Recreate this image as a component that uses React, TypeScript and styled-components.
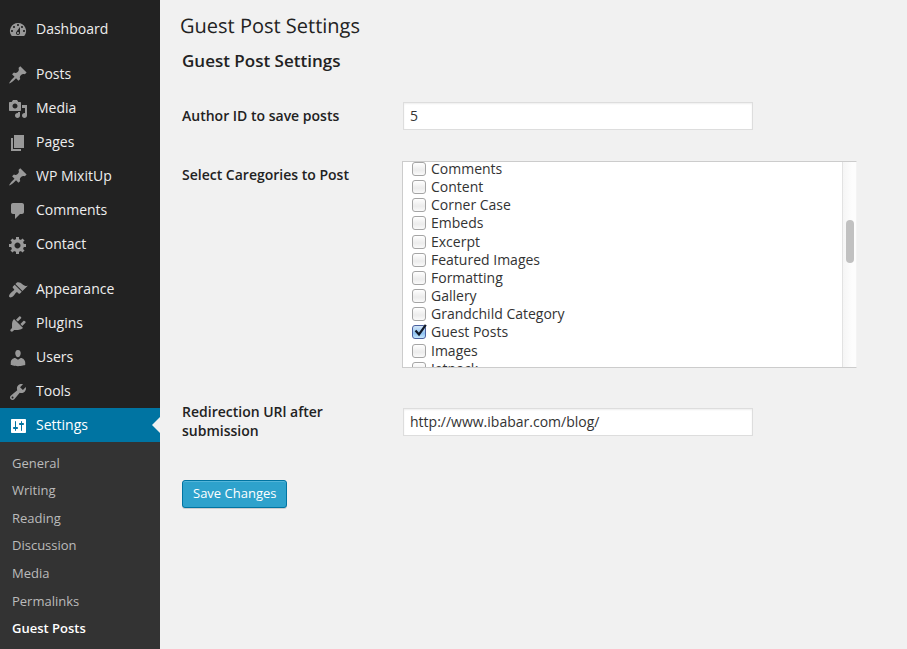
import React, { useLayoutEffect, useRef } from "react";
import styled, { createGlobalStyle, css } from "styled-components";

const GlobalStyle = createGlobalStyle`
  *, *::before, *::after { box-sizing: border-box; }
  body {
    margin: 0;
    background: #f1f1f1;
    color: #333;
    font-family: "Open Sans", "Noto Sans", sans-serif;
    font-size: 14px;
    line-height: 19px;
  }
  ul { list-style: none; margin: 0; padding: 0; }
`;

const Page = styled.div`
  display: flex;
  min-height: 100vh;
`;

const Sidebar = styled.nav`
  flex: 0 0 160px;
  padding-top: 12px;
  background: #222;
`;

const MenuGroup = styled.ul`
  & + & { margin-top: 11px; }
`;

const MenuLink = styled.a<{ $current?: boolean }>`
  position: relative;
  display: flex;
  align-items: center;
  gap: 8px;
  height: 34px;
  padding: 0 0 2px 8px;
  color: ${(p) => (p.$current ? "#fff" : "#eee")};
  background: ${(p) => (p.$current ? "#0074a2" : "transparent")};
  text-decoration: none;

  ${(p) =>
    p.$current &&
    css`
      &::after {
        content: "";
        position: absolute;
        right: 0;
        top: 9px;
        border: 8px solid transparent;
        border-left-width: 0;
        border-right-color: #f1f1f1;
      }
    `}
`;

const MenuIcon = styled.svg<{ $current?: boolean }>`
  flex: none;
  width: 20px;
  height: 20px;
  margin-top: 4px;
  fill: ${(p) => (p.$current ? "#fff" : "#999")};
`;

const Submenu = styled.ul`
  display: grid;
  grid-auto-rows: 1fr;
  height: 207px;
  padding: 7px 0;
  background: #333;
`;

const SubmenuItem = styled.li`
  display: flex;
  align-items: center;
`;

const SubmenuLink = styled.a<{ $current?: boolean }>`
  flex: 1;
  padding-left: 12px;
  font-size: 13px;
  line-height: 16px;
  font-weight: ${(p) => (p.$current ? 600 : 400)};
  color: ${(p) => (p.$current ? "#fff" : "#bbb")};
  text-decoration: none;
`;

const Main = styled.main`
  flex: 1;
  min-width: 0;
  padding: 10px 50px 20px 20px;
`;

const PageTitle = styled.h1`
  margin: 0;
  font-size: 20px;
  line-height: 32px;
  font-weight: 400;
  color: #222;
  text-rendering: geometricPrecision;
`;

const Form = styled.form`
  display: flex;
  flex-direction: column;
  gap: 30px;
  padding-left: 2px;
`;

const SectionTitle = styled.h2`
  margin: 9px 0 0;
  font-size: 17px;
  line-height: 20px;
  font-weight: 600;
  color: #222;
`;

const FormRow = styled.div<{ $top?: boolean }>`
  display: grid;
  grid-template-columns: 200px minmax(0, 1fr);
  column-gap: 20px;
  align-items: ${(p) => (p.$top ? "start" : "center")};
`;

const FieldLabel = styled.label`
  padding: 4px 0 6px;
  font-weight: 600;
  color: #222;
`;

const TextField = styled.input`
  width: 350px;
  max-width: 100%;
  height: 28px;
  margin: 1px;
  padding: 0 6px 1px;
  border: 1px solid #ddd;
  border-radius: 0;
  background: #fff;
  box-shadow: inset 0 1px 2px rgba(0, 0, 0, 0.07);
  color: #333;
  font: inherit;
`;

const CategoryBox = styled.div`
  display: flex;
  height: 207px;
  border: 1px solid #ccc;
  border-right-color: #f4f4f4;
  background: #fff;
`;

const CategoryScroll = styled.div`
  flex: 1;
  overflow-y: auto;
  scrollbar-width: none;
`;

const CategoryList = styled.ul`
  display: grid;
  grid-auto-rows: 1fr;
  height: 218px;
  padding-left: 9px;
`;

const CategoryLabel = styled.label`
  position: relative;
  display: flex;
  align-items: center;
  gap: 5px;
  line-height: 18px;
`;

const Checkbox = styled.input`
  appearance: none;
  flex: none;
  width: 14px;
  height: 14px;
  margin: 0;
  border: 1px solid #a5a5a5;
  border-radius: 3px;
  background: linear-gradient(#fff, #f0f0f0 45%, #ececec 60%, #fafafa);

  &:checked {
    border-color: #4a5f9e;
    background: linear-gradient(#d2e6f8, #a5cdf3 45%, #8fc2f0 60%, #c4e6fc);
  }
  & + svg { display: none; }
  &:checked + svg { display: block; }
`;

const CheckMark = styled.svg`
  position: absolute;
  left: 1px;
  top: 0;
  width: 14px;
  height: 16px;
  fill: none;
  stroke: #101828;
  stroke-width: 2.2;
  pointer-events: none;
`;

const ScrollTrack = styled.div`
  flex: 0 0 14px;
  padding: 58px 2px 0 3px;
  border-left: 1px solid #e2e2e2;
  background: linear-gradient(to right, #f5f5f5, #fdfdfd 70%);
`;

const ScrollThumb = styled.div`
  height: 43px;
  border-radius: 4px;
  background: #c1c1c1;
`;

const SaveButton = styled.button`
  align-self: flex-start;
  height: 28px;
  margin-top: 4px;
  padding: 0 10px 1px;
  border: 1px solid #0074a2;
  border-radius: 3px;
  background: #2ea2cc;
  box-shadow: inset 0 1px 0 rgba(120, 200, 230, 0.5), 0 1px 0 rgba(0, 0, 0, 0.15);
  color: #fff;
  font: inherit;
  font-size: 13px;
`;

const icons = {
  dashboard:
    "M3.76 16h12.48A7.998 7.998 0 0 0 10 3a7.998 7.998 0 0 0-6.24 13zM10 4c.55 0 1 .45 1 1s-.45 1-1 1-1-.45-1-1 .45-1 1-1zM6 6c.55 0 1 .45 1 1s-.45 1-1 1-1-.45-1-1 .45-1 1-1zm8 0c.55 0 1 .45 1 1s-.45 1-1 1-1-.45-1-1 .45-1 1-1zm-5.37 5.55L12 7v6c0 1.1-.9 2-2 2s-2-.9-2-2c0-.57.24-1.08.63-1.45zM4 10c.55 0 1 .45 1 1s-.45 1-1 1-1-.45-1-1 .45-1 1-1zm12 0c.55 0 1 .45 1 1s-.45 1-1 1-1-.45-1-1 .45-1 1-1zm-5 3c0-.55-.45-1-1-1s-1 .45-1 1 .45 1 1 1 1-.45 1-1z",
  pin: "M10.44 3.02l1.82-1.82 6.36 6.35-1.83 1.82c-1.05-.68-2.48-.57-3.41.36l-.75.75c-.92.93-1.04 2.35-.35 3.41l-1.83 1.82-2.41-2.41-2.8 2.79c-.42.42-3.38 2.71-3.8 2.29s1.86-3.39 2.28-3.81l2.79-2.79L4.1 9.36l1.83-1.82c1.05.69 2.48.57 3.4-.36l.75-.75c.93-.92 1.05-2.35.36-3.41z",
  media:
    "M13 11V4c0-.55-.45-1-1-1h-1.67L9 1H5L3.67 3H2c-.55 0-1 .45-1 1v7c0 .55.45 1 1 1h10c.55 0 1-.45 1-1zM7 4.5c1.38 0 2.5 1.12 2.5 2.5S8.38 9.5 7 9.5 4.5 8.38 4.5 7 5.62 4.5 7 4.5zM14 6h5v10.5c0 1.38-1.12 2.5-2.5 2.5S14 17.88 14 16.5s1.12-2.5 2.5-2.5c.17 0 .34.02.5.05V9h-3V6zm-4 8.05V13h2v3.5c0 1.38-1.12 2.5-2.5 2.5S7 17.88 7 16.5 8.12 14 9.5 14c.17 0 .34.02.5.05z",
  page: "M6 15V2h10v13H6zm-1 1h8v2H3V5h2v11z",
  comment:
    "M5 2h9c1.1 0 2 .9 2 2v7c0 1.1-.9 2-2 2h-2l-5 5v-5H5c-1.1 0-2-.9-2-2V4c0-1.1.9-2 2-2z",
  gear: "M18 12h-2.18c-.17.7-.44 1.35-.81 1.93l1.54 1.54-2.1 2.1-1.54-1.54c-.58.36-1.23.63-1.91.79V19H8v-2.18c-.68-.16-1.33-.43-1.91-.79l-1.54 1.54-2.12-2.12 1.54-1.54c-.36-.58-.63-1.23-.79-1.91H1V9.03h2.17c.16-.7.44-1.35.8-1.94L2.43 5.55l2.1-2.1 1.54 1.54c.58-.37 1.24-.64 1.93-.81V2h3v2.18c.68.16 1.33.43 1.91.79l1.54-1.54 2.12 2.12-1.54 1.54c.36.59.64 1.24.8 1.94H18V12zm-8.5 1.5c1.66 0 3-1.34 3-3s-1.34-3-3-3-3 1.34-3 3 1.34 3 3 3z",
  brush:
    "M14.48 11.06L7.41 3.99l1.5-1.5c.5-.56 2.3-.47 3.51.32 1.21.8 1.43 1.28 2.91 2.1 1.18.64 2.45 1.26 4.45.85zm-.71.71L6.7 4.7 4.93 6.47c-.39.39-.39 1.02 0 1.41l1.06 1.06c.39.39.39 1.03 0 1.42-.6.6-1.43 1.11-2.21 1.69-.35.26-.7.53-1.01.84C1.43 14.23.4 16.08 1.4 17.07c.99 1 2.84-.03 4.18-1.36.31-.31.58-.66.85-1.02.57-.78 1.08-1.61 1.69-2.21.39-.39 1.02-.39 1.41 0l1.06 1.06c.39.39 1.02.39 1.41 0z",
  plug: "M13.11 4.36L9.87 7.6 8 5.73l3.24-3.24c.35-.34 1.05-.2 1.56.32.52.51.66 1.21.31 1.55zm-8 1.77l.91-1.12 9.01 9.01-1.19.84c-.71.71-2.63 1.16-3.82 1.16H6.14L4.9 17.26c-.59.59-1.54.59-2.12 0-.59-.58-.59-1.53 0-2.12l1.24-1.24v-3.88c0-1.13.4-3.19 1.09-3.89zm7.26 3.97l3.24-3.24c.34-.35 1.04-.21 1.55.31.52.51.66 1.21.31 1.55l-3.24 3.25z",
  user: "M10 9.25c-2.27 0-2.73-3.44-2.73-3.44C7 4.02 7.82 2 9.97 2c2.16 0 2.98 2.02 2.71 3.81 0 0-.41 3.44-2.68 3.44zm0 2.57L12.72 10c2.39 0 4.52 2.33 4.52 4.53v2.49s-3.65 1.13-7.24 1.13c-3.65 0-7.24-1.13-7.24-1.13v-2.49c0-2.25 1.94-4.48 4.47-4.48z",
  wrench:
    "M16.68 9.77c-1.34 1.34-3.3 1.67-4.95.99l-5.41 6.52c-.99.99-2.59.99-3.58 0s-.99-2.59 0-3.57l6.52-5.42c-.68-1.65-.35-3.61.99-4.95 1.28-1.28 3.12-1.62 4.72-1.06l-2.89 2.89 2.82 2.82 2.86-2.87c.53 1.58.18 3.39-1.08 4.65zM3.81 16.21c.4.39 1.04.39 1.43 0 .4-.4.4-1.04 0-1.43-.39-.4-1.03-.4-1.43 0-.39.39-.39 1.03 0 1.43z",
  sliders:
    "M18 16V4c0-.55-.45-1-1-1H4c-.55 0-1 .45-1 1v12c0 .55.45 1 1 1h13c.55 0 1-.45 1-1zM8 11h1c.55 0 1 .45 1 1s-.45 1-1 1H8v1.5c0 .28-.22.5-.5.5s-.5-.22-.5-.5V13H6c-.55 0-1-.45-1-1s.45-1 1-1h1V5.5c0-.28.22-.5.5-.5s.5.22.5.5V11zm5-2h-1c-.55 0-1-.45-1-1s.45-1 1-1h1V5.5c0-.28.22-.5.5-.5s.5.22.5.5V7h1c.55 0 1 .45 1 1s-.45 1-1 1h-1v5.5c0 .28-.22.5-.5.5s-.5-.22-.5-.5V9z",
};

type MenuEntry = { label: string; icon: keyof typeof icons; current?: boolean };

const menu: MenuEntry[][] = [
  [{ label: "Dashboard", icon: "dashboard" }],
  [
    { label: "Posts", icon: "pin" },
    { label: "Media", icon: "media" },
    { label: "Pages", icon: "page" },
    { label: "WP MixitUp", icon: "pin" },
    { label: "Comments", icon: "comment" },
    { label: "Contact", icon: "gear" },
  ],
  [
    { label: "Appearance", icon: "brush" },
    { label: "Plugins", icon: "plug" },
    { label: "Users", icon: "user" },
    { label: "Tools", icon: "wrench" },
    { label: "Settings", icon: "sliders", current: true },
  ],
];

const submenu = ["General", "Writing", "Reading", "Discussion", "Media", "Permalinks", "Guest Posts"];

const categories = [
  "Comments",
  "Content",
  "Corner Case",
  "Embeds",
  "Excerpt",
  "Featured Images",
  "Formatting",
  "Gallery",
  "Grandchild Category",
  "Guest Posts",
  "Images",
  "Jetpack",
];

function CategoryPicker() {
  const scroller = useRef<HTMLDivElement>(null);

  useLayoutEffect(() => {
    if (scroller.current) scroller.current.scrollTop = 2;
  }, []);

  return (
    <CategoryBox role="group" aria-labelledby="categories-label">
      <CategoryScroll ref={scroller}>
        <CategoryList>
          {categories.map((name) => (
            <li key={name}>
              <CategoryLabel>
                <Checkbox type="checkbox" defaultChecked={name === "Guest Posts"} />
                <CheckMark viewBox="0 0 14 16" aria-hidden="true">
                  <path d="M2.5 7.5L6 11.5L12.8 1.8" />
                </CheckMark>
                {name}
              </CategoryLabel>
            </li>
          ))}
        </CategoryList>
      </CategoryScroll>
      <ScrollTrack aria-hidden="true">
        <ScrollThumb />
      </ScrollTrack>
    </CategoryBox>
  );
}

export default function App() {
  return (
    <>
      <GlobalStyle />
      <Page>
        <Sidebar aria-label="Main menu">
          {menu.map((group, i) => (
            <MenuGroup key={i}>
              {group.map(({ label, icon, current }) => (
                <li key={label}>
                  <MenuLink href="#" $current={current}>
                    <MenuIcon viewBox="0 0 20 20" $current={current} aria-hidden="true">
                      <path d={icons[icon]} />
                    </MenuIcon>
                    {label}
                  </MenuLink>
                  {current && (
                    <Submenu>
                      {submenu.map((item) => (
                        <SubmenuItem key={item}>
                          <SubmenuLink href="#" $current={item === "Guest Posts"}>
                            {item}
                          </SubmenuLink>
                        </SubmenuItem>
                      ))}
                    </Submenu>
                  )}
                </li>
              ))}
            </MenuGroup>
          ))}
        </Sidebar>
        <Main>
          <PageTitle>Guest Post Settings</PageTitle>
          <Form onSubmit={(e) => e.preventDefault()}>
            <SectionTitle>Guest Post Settings</SectionTitle>
            <FormRow>
              <FieldLabel htmlFor="author-id">Author ID to save posts</FieldLabel>
              <TextField id="author-id" type="text" defaultValue="5" />
            </FormRow>
            <FormRow $top>
              <FieldLabel as="span" id="categories-label">
                Select Caregories to Post
              </FieldLabel>
              <CategoryPicker />
            </FormRow>
            <FormRow>
              <FieldLabel htmlFor="redirect-url">Redirection URl after submission</FieldLabel>
              <TextField id="redirect-url" type="text" defaultValue="http://www.ibabar.com/blog/" />
            </FormRow>
            <SaveButton type="submit">Save Changes</SaveButton>
          </Form>
        </Main>
      </Page>
    </>
  );
}
